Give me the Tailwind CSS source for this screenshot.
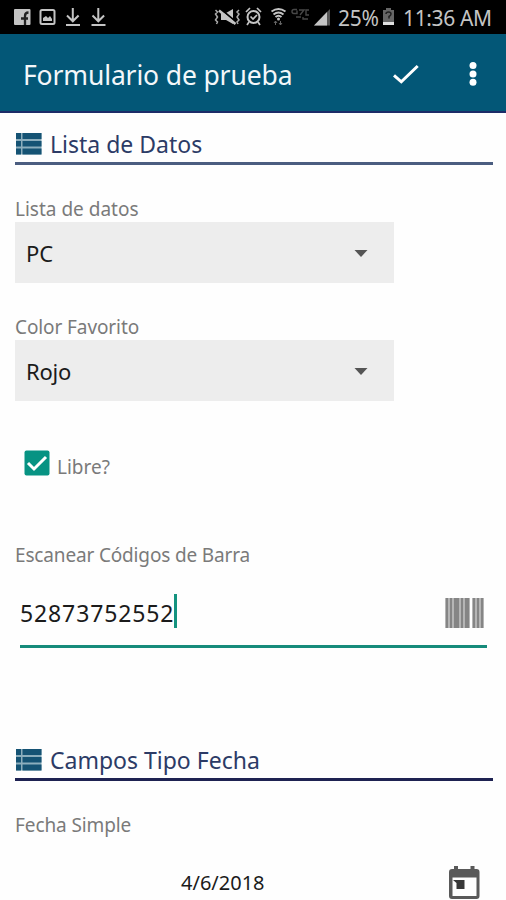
<!DOCTYPE html>
<html lang="es">
<head>
<meta charset="utf-8">
<meta name="viewport" content="width=device-width">
<title>Formulario de prueba</title>
<script src="https://cdn.jsdelivr.net/npm/@tailwindcss/browser@4"></script>
</head>
<body class="h-[900px] w-[506px] overflow-hidden bg-[#fefefe] font-['Noto_Sans',sans-serif] text-[#7a7a7a]">
<div class="flex h-[34px] items-center bg-black pl-[14px] pr-[14px] text-[#c4c4c4]">
  <svg class="h-[34px] w-[94px] shrink-0" viewBox="14 0 94 34" fill="none">
    <rect x="14" y="9" width="16.5" height="16" rx="1" fill="#c4c4c4"/>
    <path d="M25 25v-9q0-3.500 3.500-3.500M21 18.500h7" stroke="#222" stroke-width="2.300"/>
    <rect x="40.500" y="10" width="14" height="14" rx="1.500" stroke="#c4c4c4" stroke-width="2"/>
    <path d="M43 21v-3l3-2 2 2 2-2 2 3v2z" fill="#c4c4c4"/>
    <g stroke="#c4c4c4" stroke-width="2"><path d="M72.800 8v13M67 15.500l5.800 5.800 5.800-5.800M66 24.900h14"/><path d="M98.300 8v13M92.500 15.500l5.800 5.800 5.800-5.800M91.500 24.900h14"/></g>
  </svg>
  <svg class="ml-[105px] h-[34px] w-[120px] shrink-0" viewBox="213 0 120 34" fill="none">
    <path d="M221 13h5l7-4v15l-7-4h-5z" fill="#c4c4c4"/><path d="M220 8.500L236 22" stroke="#000" stroke-width="2"/><path d="M219 10.500L235.500 24" stroke="#c4c4c4" stroke-width="2.500"/>
    <path d="M215.500 10l2 2-2 2 2 3-2 3 2 2-1 2M239 10l-2 2 2 2-2 3 2 3-2 2 1 2" stroke="#aaa" stroke-width="1.500"/>
    <circle cx="253.500" cy="17" r="6" stroke="#c4c4c4" stroke-width="2"/><path d="M250.500 16.500l2.500 2.500 4-4M246 12l4-4M257 8l4 4M249 22l-2 3M258 22l2 3" stroke="#c4c4c4" stroke-width="1.700"/>
    <path d="M271.500 11.500q7-5 14 0M273.500 14.500q5-4 10 0M275.500 17q3-2.500 6 0" stroke="#c4c4c4" stroke-width="2"/><circle cx="278.500" cy="19" r="1.500" fill="#c4c4c4"/><path d="M275.500 25v-4M274 23l1.500-2 1.500 2M280.500 21v4M279 23l1.500 2 1.500-2" stroke="#666"/>
    <path d="M297 9.500h-3q-2 0-2 2t2 2h3v-3M299 10h5l-4 5M309 10h-3v5h3M296 17h5M303 17v2h5" stroke="#484848" stroke-width="1.400"/>
    <path d="M314 25.500L330 9v16.500z" fill="#555"/><path d="M314 25.500L327 12v13.500z" fill="#c4c4c4"/>
  </svg>
  <span class="ml-[5px] w-[44px] shrink-0 whitespace-nowrap pt-px text-[21px] leading-[34px] tracking-[-0.3px]">25%</span>
  <svg class="h-[34px] w-[13px] shrink-0" viewBox="0 0 13 34"><path d="M4 8h5v2h3v15H1V10h3z" fill="#666"/><path d="M1 22h11v3H1z" fill="#e0e0e0"/><path d="M4 14q0-2 2.500-2T9 14q0 1.500-2 2.500v2" fill="none" stroke="#222" stroke-width="1.500"/></svg>
  <span class="ml-[8px] w-[91px] shrink-0 whitespace-nowrap pt-px text-[21px] leading-[34px] tracking-[-0.35px]">11:36 AM</span>
</div>
<header class="flex h-[79px] items-center border-b-2 border-[#1c2c68] bg-[#035777] pl-[23px]">
  <h1 class="w-[358px] whitespace-nowrap pt-[4px] text-[26.5px] leading-[40px] tracking-[-0.14px] text-[#f3f7fa]">Formulario de prueba</h1>
  <svg class="h-[40px] w-[50px]" viewBox="381 53 50 40" fill="none"><path d="M394 75.300l7.300 6.500L417.700 66" stroke="#fff" stroke-width="3"/></svg>
  <svg class="ml-[32px] h-[40px] w-[20px]" viewBox="463 53 20 40" fill="#fff"><circle cx="473" cy="65.500" r="3.500"/><circle cx="473" cy="74" r="3.500"/><circle cx="473" cy="82.200" r="3.500"/></svg>
</header>
<main class="pl-[15px]">
  <section>
    <div class="flex h-[52px] w-[478px] items-center border-b-3 border-[#4b5d80] pt-[13px]">
      <svg class="h-[22px] w-[27px]" viewBox="0 0 27 22" fill="#155374"><path d="M1 0h25.500v21.500H1z" fill="#8caebd"/><path d="M1 0h5v6H1zM7.500 0h19v6h-19zM1 8h5v5.500H1zM7.500 8h19v5.500h-19zM1 15.500h5v6H1zM7.500 15.500h19v6h-19z"/></svg>
      <h2 class="ml-[8px] whitespace-nowrap text-[23px] leading-[32px] text-[#2c3b66]">Lista de Datos</h2>
    </div>
    <div class="mt-[31px] h-[26px] whitespace-nowrap text-[19px] leading-[26px]">Lista de datos</div>
    <div class="flex h-[61px] w-[379px] items-center justify-between bg-[#ededed] pl-[11px] pr-[26px] text-[22px] leading-[30px] text-[#1b1b1b]"><span>PC</span><svg class="h-[8px] w-[14px]" viewBox="0 0 14 8"><path d="M0.500 1h13L7 8z" fill="#555"/></svg></div>
    <div class="mt-[31px] h-[26px] whitespace-nowrap text-[19px] leading-[26px] tracking-[-0.1px]">Color Favorito</div>
    <div class="flex h-[61px] w-[379px] items-center justify-between bg-[#ededed] pl-[11px] pr-[26px] text-[22px] leading-[30px] tracking-[-0.2px] text-[#1b1b1b]"><span>Rojo</span><svg class="h-[8px] w-[14px]" viewBox="0 0 14 8"><path d="M0.500 1h13L7 8z" fill="#555"/></svg></div>
    <div class="mt-[49px] flex h-[30px] pl-[9px]">
      <svg class="h-[26px] w-[26px]" viewBox="0 0 26 26"><rect x=".5" y=".5" width="25" height="25" rx="2" fill="#079383"/><path d="M4 13l6 6L22 7" fill="none" stroke="#fff" stroke-width="3"/></svg>
      <span class="ml-[7px] mt-[4px] whitespace-nowrap text-[19px] leading-[26px]">Libre?</span>
    </div>
    <div class="mt-[62px] h-[26px] whitespace-nowrap text-[19px] leading-[26px] tracking-[-0.16px]">Escanear Códigos de Barra</div>
    <div class="ml-[5px] mt-[25px] flex h-[55px] w-[467px] items-start border-b-3 border-[#168b7b]">
      <span class="mt-[4px] w-[154px] whitespace-nowrap text-[23px] leading-[32px] tracking-[0.88px] text-[#1b1b1b]">52873752552</span>
      <span class="mt-[1px] h-[34px] w-[3px] bg-[#14937f]"></span>
      <svg class="ml-auto mr-[3px] mt-[5px] h-[30px] w-[39px]" viewBox="0 0 39 30"><path d="M0 0h25v30H0zM27 0h12v30H27z" fill="#b5b5b5"/><path d="M1 0h2v30H1zM5 0h2v30H5zM9 0h5v30H9zM16 0h2v30h-2zM20 0h4v30h-4zM28 0h2v30h-2zM32 0h2v30h-2zM36 0h2v30h-2z" fill="#858585"/></svg>
    </div>
  </section>
  <section class="mt-[83px]">
    <div class="flex h-[50px] w-[478px] items-center border-b-3 border-[#1e2252] pt-[11px]">
      <svg class="h-[22px] w-[27px]" viewBox="0 0 27 22" fill="#155374"><path d="M1 0h25.500v21.500H1z" fill="#8caebd"/><path d="M1 0h5v6H1zM7.500 0h19v6h-19zM1 8h5v5.500H1zM7.500 8h19v5.500h-19zM1 15.500h5v6H1zM7.500 15.500h19v6h-19z"/></svg>
      <h2 class="ml-[8px] whitespace-nowrap text-[23px] leading-[32px] text-[#2c3b66]">Campos Tipo Fecha</h2>
    </div>
    <div class="mt-[31px] h-[26px] whitespace-nowrap text-[19px] leading-[26px] tracking-[-0.1px]">Fecha Simple</div>
    <div class="mt-[26px] flex h-[36px] items-start">
      <span class="ml-[166px] mt-[5px] w-[268px] whitespace-nowrap text-[20px] leading-[28px] text-[#1b1b1b]">4/6/2018</span>
      <svg class="h-[36px] w-[32px]" viewBox="449 864 32 36"><path d="M454 866h4v3h12.500v-3h4v3h2q3 0 3 3v24q0 3-3 3h-24.500q-3 0-3-3v-24q0-3 3-3h2z" fill="#595959"/><path d="M452.500 877.500h24V896h-24z" fill="#fefefe"/><path d="M453 880h11.500v9h-8v-6z" fill="#383838"/></svg>
    </div>
  </section>
</main>
</body>
</html>
